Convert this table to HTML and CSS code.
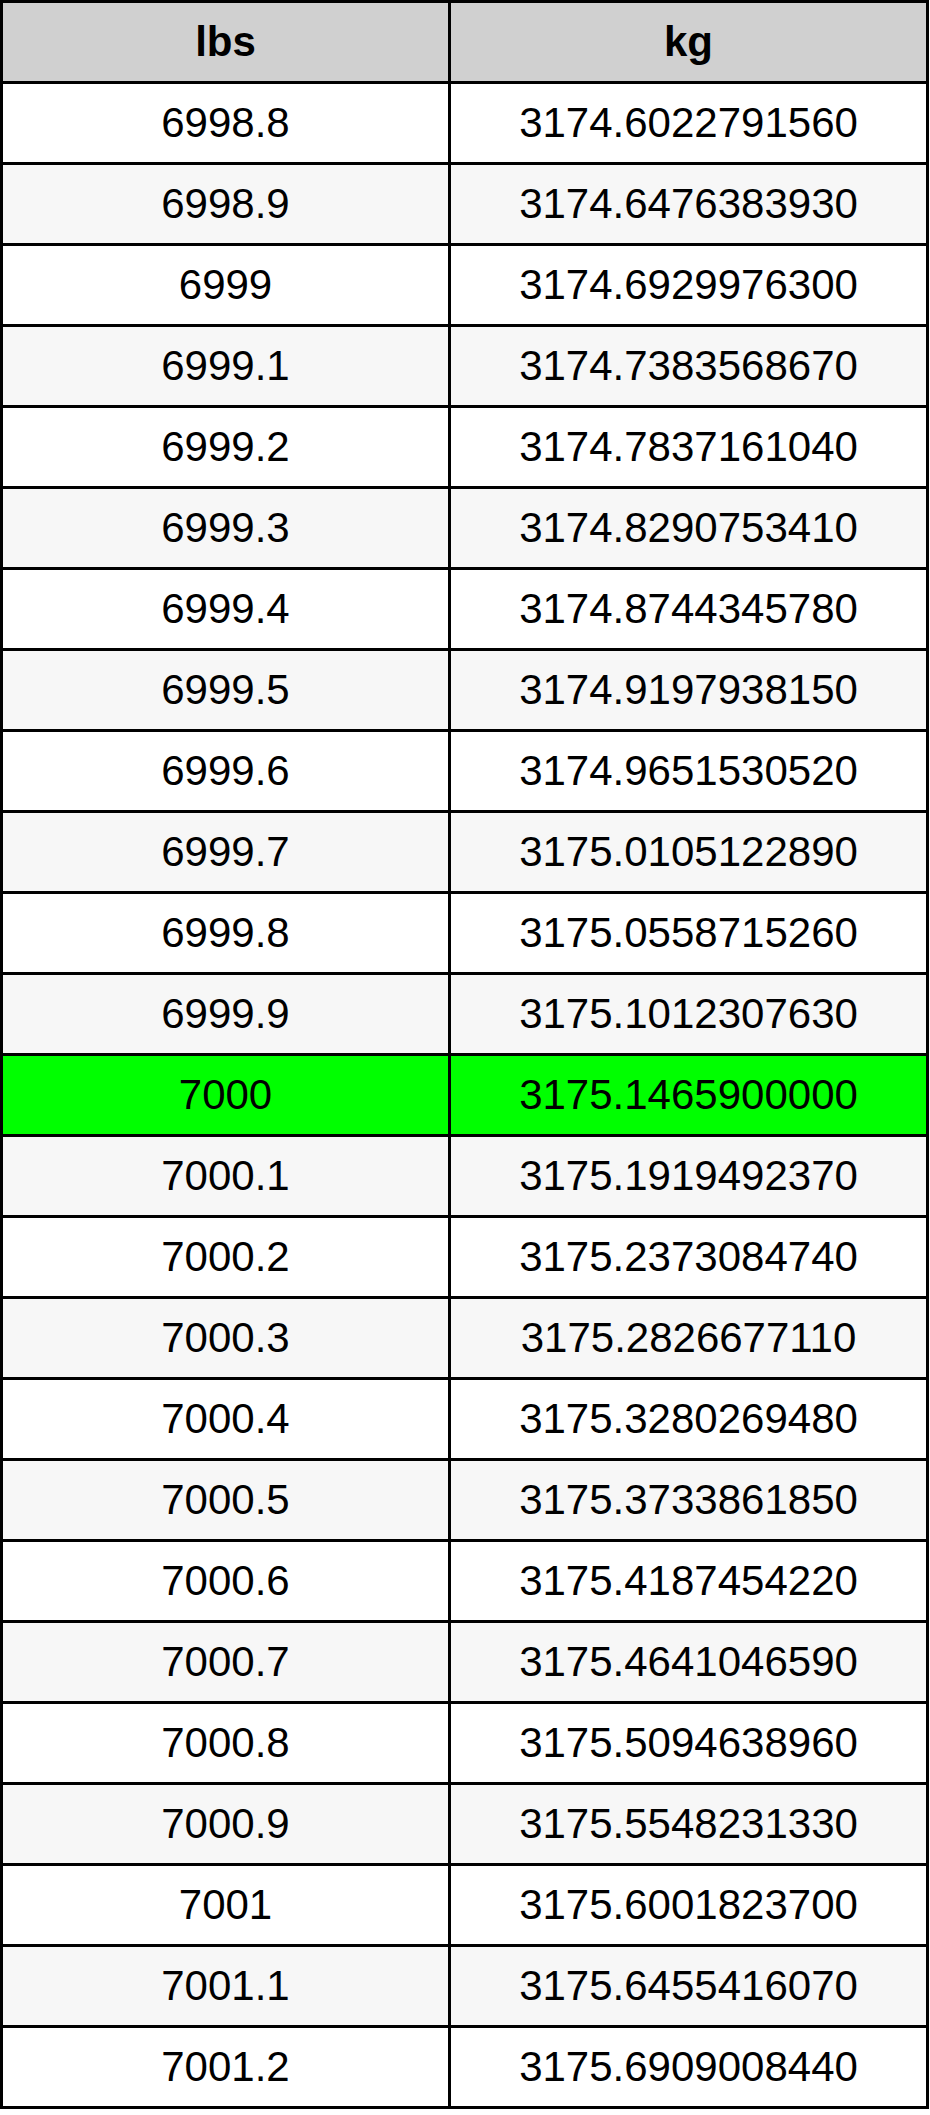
FILE: index.html
```html
<!DOCTYPE html>
<html>
<head>
<meta charset="utf-8">
<link rel="stylesheet" href="styles.css">
</head>
<body>
<table class="conv">
<thead>
<tr><th class="c1">lbs</th><th class="c2">kg</th></tr>
</thead>
<tbody>
<tr><td>6998.8</td><td>3174.6022791560</td></tr>
<tr><td>6998.9</td><td>3174.6476383930</td></tr>
<tr><td>6999</td><td>3174.6929976300</td></tr>
<tr><td>6999.1</td><td>3174.7383568670</td></tr>
<tr><td>6999.2</td><td>3174.7837161040</td></tr>
<tr><td>6999.3</td><td>3174.8290753410</td></tr>
<tr><td>6999.4</td><td>3174.8744345780</td></tr>
<tr><td>6999.5</td><td>3174.9197938150</td></tr>
<tr><td>6999.6</td><td>3174.9651530520</td></tr>
<tr><td>6999.7</td><td>3175.0105122890</td></tr>
<tr><td>6999.8</td><td>3175.0558715260</td></tr>
<tr><td>6999.9</td><td>3175.1012307630</td></tr>
<tr class="hl"><td>7000</td><td>3175.1465900000</td></tr>
<tr><td>7000.1</td><td>3175.1919492370</td></tr>
<tr><td>7000.2</td><td>3175.2373084740</td></tr>
<tr><td>7000.3</td><td>3175.2826677110</td></tr>
<tr><td>7000.4</td><td>3175.3280269480</td></tr>
<tr><td>7000.5</td><td>3175.3733861850</td></tr>
<tr><td>7000.6</td><td>3175.4187454220</td></tr>
<tr><td>7000.7</td><td>3175.4641046590</td></tr>
<tr><td>7000.8</td><td>3175.5094638960</td></tr>
<tr><td>7000.9</td><td>3175.5548231330</td></tr>
<tr><td>7001</td><td>3175.6001823700</td></tr>
<tr><td>7001.1</td><td>3175.6455416070</td></tr>
<tr><td>7001.2</td><td>3175.6909008440</td></tr>
</tbody>
</table>
</body>
</html>
```
FILE: styles.css
```css
html, body {
  margin: 0;
  padding: 0;
  background: #ffffff;
}
.conv {
  border-collapse: separate;
  border-spacing: 3px;
  background: #000000;
  table-layout: fixed;
  width: 929px;
  font-family: "Liberation Sans", Arial, sans-serif;
  font-size: 42px;
  color: #000000;
}
.conv th, .conv td {
  height: 78px;
  padding: 0;
  text-align: center;
  vertical-align: middle;
  line-height: 48px;
}
.conv th {
  background: #d0d0d0;
  font-weight: bold;
}
.c1 { width: 445px; }
.c2 { width: 475px; }
.conv tbody tr td { background: #ffffff; }
.conv tbody tr:nth-child(even) td { background: #f7f7f7; }
.conv tbody tr.hl td { background: #00ff00; }
```
